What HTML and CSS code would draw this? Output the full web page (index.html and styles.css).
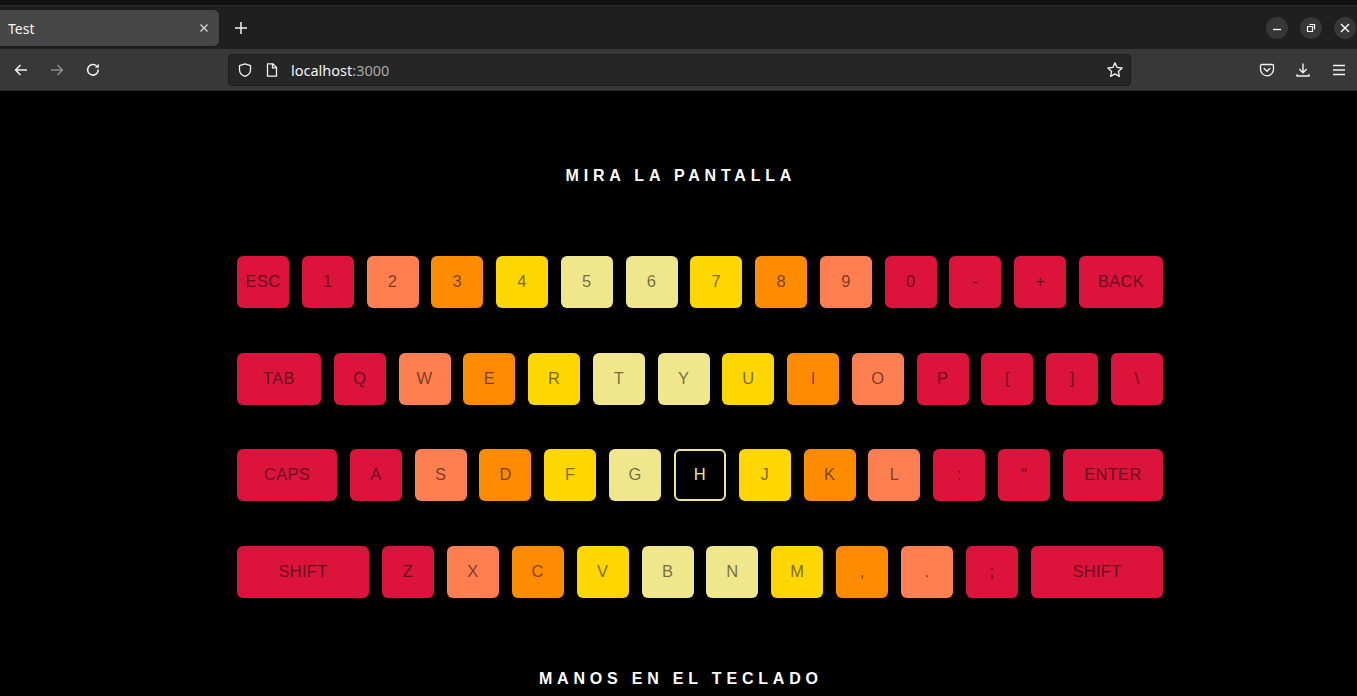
FILE: index.html
```html
<!DOCTYPE html>
<html lang="es">
<head>
<meta charset="utf-8">
<title>Test</title>
<link rel="stylesheet" href="styles.css">
</head>
<body>
<div class="window">
  <div class="topstrip"></div>
  <div class="tabbar">
    <div class="tab">
      <span class="tab-title">Test</span>
      <svg class="tab-close" width="12" height="12" viewBox="0 0 12 12"><path d="M2.5 2.5l7 7M9.5 2.5l-7 7" stroke="#d8d8d8" stroke-width="1.2" fill="none"/></svg>
    </div>
    <div class="newtab">
      <svg width="14" height="14" viewBox="0 0 14 14"><path d="M7 1v12M1 7h12" stroke="#f2f2f2" stroke-width="1.5" fill="none"/></svg>
    </div>
    <div class="spacer"></div>
    <div class="winctl">
      <span class="circ"><svg width="10" height="10" viewBox="0 0 10 10"><path d="M1 6.5h8" stroke="#fff" stroke-width="1.3"/></svg></span>
      <span class="circ"><svg width="10" height="10" viewBox="0 0 10 10"><path d="M3.5 1.5h5v5M1.5 3.5h5v5h-5z" stroke="#fff" stroke-width="1.2" fill="none"/></svg></span>
      <span class="circ"><svg width="10" height="10" viewBox="0 0 10 10"><path d="M1 1l8 8M9 1l-8 8" stroke="#fff" stroke-width="1.4" fill="none"/></svg></span>
    </div>
  </div>
  <div class="navbar">
    <span class="navbtn"><svg width="16" height="16" viewBox="0 0 16 16"><path d="M14 8H2.5M7.5 3L2.5 8l5 5" stroke="#f2f2f2" stroke-width="1.5" fill="none" stroke-linejoin="round"/></svg></span>
    <span class="navbtn"><svg width="16" height="16" viewBox="0 0 16 16"><path d="M2 8h11.5M8.5 3l5 5-5 5" stroke="#8c8c8c" stroke-width="1.5" fill="none" stroke-linejoin="round"/></svg></span>
    <span class="navbtn"><svg width="16" height="16" viewBox="0 0 16 16"><path d="M13.2 7.5A5.3 5.3 0 1 1 11.6 4" stroke="#f2f2f2" stroke-width="1.6" fill="none"/><path d="M13.8 1.8v4h-4z" fill="#f2f2f2"/></svg></span>
    <div class="urlbar">
      <svg class="ico" width="16" height="16" viewBox="0 0 16 16"><path d="M8 1.8l5.5 1.9v4.1c0 3.3-2.4 5.6-5.5 6.6-3.1-1-5.5-3.3-5.5-6.6V3.7z" stroke="#f2f2f2" stroke-width="1.3" fill="none" stroke-linejoin="round"/></svg>
      <svg class="ico doc-ico" width="16" height="16" viewBox="0 0 16 16"><path d="M3.5 1.8h5.3l3.7 3.7v8.7h-9z" stroke="#f2f2f2" stroke-width="1.3" fill="none" stroke-linejoin="round"/><path d="M8.5 2v3.8h3.8" stroke="#f2f2f2" stroke-width="1.3" fill="none"/></svg>
      <span class="url">localhost<span class="port">:3000</span></span>
      <span class="grow"></span>
      <svg class="ico" width="18" height="18" viewBox="0 0 18 18"><path d="M9 1.8l2.1 4.6 5 .6-3.7 3.4 1 5-4.4-2.5-4.4 2.5 1-5L1.9 7l5-.6z" stroke="#f2f2f2" stroke-width="1.3" fill="none" stroke-linejoin="round"/></svg>
    </div>
    <span class="navbtn first-right"><svg width="16" height="16" viewBox="0 0 16 16"><path d="M2.8 2.5h10.4c.7 0 1.3.6 1.3 1.3v3.5a6.5 6.5 0 0 1-13 0V3.8c0-.7.6-1.3 1.3-1.3z" stroke="#f2f2f2" stroke-width="1.3" fill="none"/><path d="M5.2 6.5L8 9.2l2.8-2.7" stroke="#f2f2f2" stroke-width="1.4" fill="none" stroke-linecap="round" stroke-linejoin="round"/></svg></span>
    <span class="navbtn"><svg width="16" height="16" viewBox="0 0 16 16"><path d="M8 1.5v9M4.3 7L8 10.7 11.7 7" stroke="#f2f2f2" stroke-width="1.4" fill="none" stroke-linejoin="round"/><path d="M2 12.3v1.7h12v-1.7" stroke="#f2f2f2" stroke-width="1.4" fill="none"/></svg></span>
    <span class="navbtn"><svg width="16" height="16" viewBox="0 0 16 16"><path d="M2 3.5h12M2 8h12M2 12.5h12" stroke="#f2f2f2" stroke-width="1.4" fill="none"/></svg></span>
  </div>

  <main class="screen">
    <h1 class="caption">MIRA LA PANTALLA</h1>
    <div class="keyboard">
      <div class="row">
        <div class="key crimson">ESC</div>
        <div class="key crimson">1</div>
        <div class="key coral">2</div>
        <div class="key orange">3</div>
        <div class="key gold">4</div>
        <div class="key khaki">5</div>
        <div class="key khaki">6</div>
        <div class="key gold">7</div>
        <div class="key orange">8</div>
        <div class="key coral">9</div>
        <div class="key crimson">0</div>
        <div class="key crimson">-</div>
        <div class="key crimson">+</div>
        <div class="key crimson w84">BACK</div>
      </div>
      <div class="row">
        <div class="key crimson w84">TAB</div>
        <div class="key crimson">Q</div>
        <div class="key coral">W</div>
        <div class="key orange">E</div>
        <div class="key gold">R</div>
        <div class="key khaki">T</div>
        <div class="key khaki">Y</div>
        <div class="key gold">U</div>
        <div class="key orange">I</div>
        <div class="key coral">O</div>
        <div class="key crimson">P</div>
        <div class="key crimson">[</div>
        <div class="key crimson">]</div>
        <div class="key crimson">\</div>
      </div>
      <div class="row">
        <div class="key crimson w100">CAPS</div>
        <div class="key crimson">A</div>
        <div class="key coral">S</div>
        <div class="key orange">D</div>
        <div class="key gold">F</div>
        <div class="key khaki">G</div>
        <div class="key active">H</div>
        <div class="key gold">J</div>
        <div class="key orange">K</div>
        <div class="key coral">L</div>
        <div class="key crimson">:</div>
        <div class="key crimson">"</div>
        <div class="key crimson w100">ENTER</div>
      </div>
      <div class="row">
        <div class="key crimson w132">SHIFT</div>
        <div class="key crimson">Z</div>
        <div class="key coral">X</div>
        <div class="key orange">C</div>
        <div class="key gold">V</div>
        <div class="key khaki">B</div>
        <div class="key khaki">N</div>
        <div class="key gold">M</div>
        <div class="key orange">,</div>
        <div class="key coral">.</div>
        <div class="key crimson">;</div>
        <div class="key crimson w132">SHIFT</div>
      </div>
    </div>
    <h2 class="caption bottom">MANOS EN EL TECLADO</h2>
  </main>
</div>
</body>
</html>
```

FILE: styles.css
```css
* { box-sizing: border-box; }
html, body { margin: 0; padding: 0; background: #000; }
body { width: 1357px; height: 696px; overflow: hidden; font-family: "Liberation Sans", Arial, sans-serif; }

.window { display: flex; flex-direction: column; height: 696px; }

.topstrip { height: 6px; background: #111111; border-bottom: 1px solid #2c2c2c; }

.tabbar {
  height: 43px;
  background: #1f1f1f;
  display: flex;
  align-items: center;
  font-family: "Noto Sans", "Open Sans", sans-serif;
}
.tab {
  width: 219px;
  height: 36px;
  margin-top: 1px;
  background: #474747;
  border-radius: 0 5px 5px 0;
  display: flex;
  align-items: center;
  padding: 0 9px 0 8px;
  box-shadow: 0 0 2px rgba(0,0,0,0.5);
}
.tab-title { flex: 1; color: #f4f4f4; font-size: 14px; }
.tab-close { display: block; }
.newtab { width: 28px; height: 28px; margin-left: 8px; display: flex; align-items: center; justify-content: center; }
.spacer { flex: 1; }
.winctl { display: flex; gap: 12px; padding-right: 1px; }
.circ {
  width: 22px; height: 22px; border-radius: 50%;
  background: #373737;
  display: flex; align-items: center; justify-content: center;
}

.navbar {
  height: 42px;
  background: #383838;
  display: flex;
  align-items: center;
  padding-left: 5px;
  border-bottom: 1px solid #2a2a2a;
}
.navbtn { width: 32px; height: 32px; display: flex; align-items: center; justify-content: center; }
.navbtn + .navbtn { margin-left: 4px; }
.navbtn.first-right { margin-left: 120px; }
.urlbar {
  margin-left: 119px;
  width: 903px;
  height: 32px;
  background: #262626;
  border: 1px solid #1b1b1b;
  border-radius: 4px;
  display: flex;
  align-items: center;
  padding: 0 6px 0 8px;
  font-family: "Noto Sans", "Open Sans", sans-serif;
}
.ico { display: block; flex: none; }
.doc-ico { margin-left: 11px; }
.url { margin-left: 11px; color: #f4f4f4; font-size: 14.5px; }
.port { color: #a8a8a8; }
.grow { flex: 1; }

.screen {
  flex: 1;
  background: #000;
  display: flex;
  flex-direction: column;
  align-items: center;
  padding-top: 75px;
}
.caption {
  margin: 0;
  color: #ffffff;
  font-family: "Liberation Sans", Arial, sans-serif;
  font-weight: bold;
  font-size: 16px;
  line-height: 20px;
  letter-spacing: 0.3em;
  padding-left: 0.3em;
}
.keyboard {
  align-self: flex-start;
  margin: 70px 0 0 237px;
  width: 926px;
  display: flex;
  flex-direction: column;
  gap: 44.7px;
}
.row { display: flex; justify-content: space-between; }
.key {
  width: 52px;
  height: 52px;
  border-radius: 6px;
  display: flex;
  align-items: center;
  justify-content: center;
  padding-bottom: 1px;
  font-size: 16.5px;
  letter-spacing: 0.3px;
  color: rgba(0, 0, 0, 0.55);
}
.w84 { width: 84px; }
.w100 { width: 100px; }
.w132 { width: 132px; }
.crimson { background: #dc143c; }
.coral { background: #ff7f50; }
.orange { background: #ff8c00; }
.gold { background: #ffd700; }
.khaki { background: #f0e68c; }
.active { background: #000; border: 2px solid #f0e68c; color: #f0e68c; }
.caption.bottom { margin-top: 71px; }
```
